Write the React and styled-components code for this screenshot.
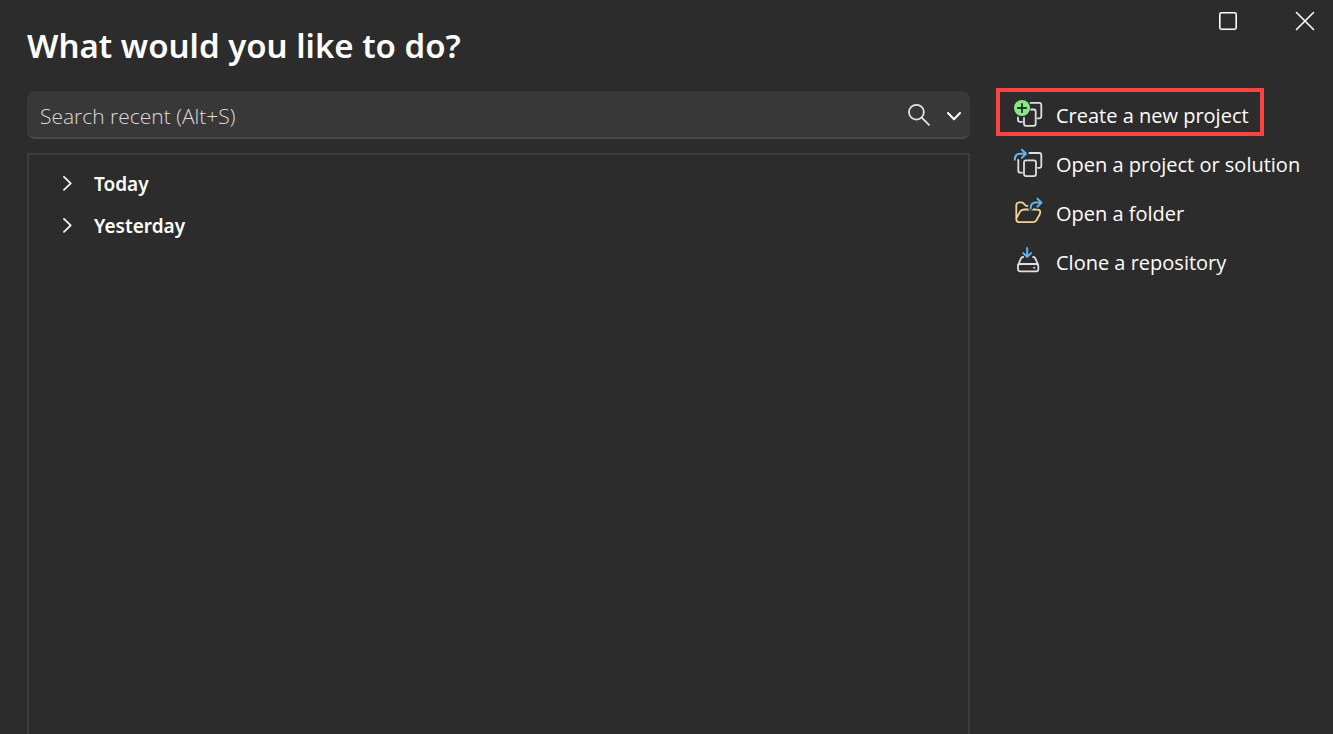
import styled, { createGlobalStyle } from "styled-components";

export default function App() {
    return (
        <>
            <GlobalStyle />
            <Window>
                <Header>
                    <Title>What would you like to do?</Title>
                    <WindowControls>
                        <ControlButton aria-label="Maximize">
                            <MaximizeIcon />
                        </ControlButton>
                        <ControlButton aria-label="Close">
                            <CloseIcon />
                        </ControlButton>
                    </WindowControls>
                </Header>
                <Content>
                    <Recent>
                        <SearchBar>
                            <SearchInput type="text" aria-label="Search recent" placeholder="Search recent (Alt+S)" />
                            <SearchButton aria-label="Search">
                                <SearchIcon />
                            </SearchButton>
                            <SearchButton aria-label="Search options">
                                <ChevronDown />
                            </SearchButton>
                        </SearchBar>
                        <RecentPanel>
                            <GroupButton aria-expanded="false">
                                <ChevronRight />
                                Today
                            </GroupButton>
                            <GroupButton aria-expanded="false">
                                <ChevronRight />
                                Yesterday
                            </GroupButton>
                        </RecentPanel>
                    </Recent>
                    <Actions>
                        <ActionButton $highlighted>
                            <NewProjectIcon />
                            <span>Create a new project</span>
                        </ActionButton>
                        <ActionButton>
                            <OpenProjectIcon />
                            <span>Open a project or solution</span>
                        </ActionButton>
                        <ActionButton>
                            <OpenFolderIcon />
                            <span>Open a folder</span>
                        </ActionButton>
                        <ActionButton>
                            <CloneIcon />
                            <span>Clone a repository</span>
                        </ActionButton>
                    </Actions>
                </Content>
            </Window>
        </>
    )
}

function MaximizeIcon() {
    return (
        <Icon width="20" height="20" viewBox="0 0 20 20" stroke="#fff" strokeWidth="1.6">
            <rect x="1.8" y="1.8" width="16.4" height="16.4" rx="1.6" />
        </Icon>
    )
}

function CloseIcon() {
    return (
        <Icon width="20" height="20" viewBox="0 0 20 20" stroke="#fff" strokeWidth="1.6">
            <path d="M1.5 1.5 18.5 18.5M18.5 1.5 1.5 18.5" />
        </Icon>
    )
}

function SearchIcon() {
    return (
        <Icon width="24" height="24" viewBox="0 0 24 24" stroke="#e4e4e4" strokeWidth="1.8">
            <circle cx="9.4" cy="10.2" r="7.4" />
            <path d="M14.8 15.6 22 22.8" />
        </Icon>
    )
}

function ChevronDown() {
    return (
        <Icon width="24" height="24" viewBox="0 0 24 24" stroke="#fff" strokeWidth="2">
            <path d="M6 11 12 17.2 18 11" />
        </Icon>
    )
}

function ChevronRight() {
    return (
        <Icon width="14" height="16" viewBox="0 0 14 16" stroke="#f2f2f2" strokeWidth="1.8">
            <path d="M4 .9 10.7 7.4 4 13.9" />
        </Icon>
    )
}

function NewProjectIcon() {
    return (
        <Icon width="32" height="32" viewBox="0 0 32 32" stroke="#dedede" strokeWidth="1.8">
            <path d="M18.5 6.8H27.2Q29.3 6.8 29.3 8.9V20.2Q29.3 22.3 27.2 22.3H25.6" />
            <path d="M19 13.5H21.7Q23.7 13.5 23.7 15.5V27.8Q23.7 29.8 21.7 29.8H14Q12 29.8 12 27.8V22" />
            <path d="M6 21.5V23.7Q6 25.8 8.1 25.8H10" />
            <circle cx="10" cy="12" r="8" fill="#89e78b" stroke="none" />
            <path d="M10 7.8V16.2M5.8 12H14.2" stroke="#20361f" strokeWidth="1.8" />
        </Icon>
    )
}

function OpenProjectIcon() {
    return (
        <Icon width="32" height="32" viewBox="0 0 32 32" stroke="#dedede" strokeWidth="1.8">
            <path d="M17.4 8H27.2Q29.3 8 29.3 10.1V20.7Q29.3 22.8 27.2 22.8H26" />
            <rect x="12" y="15.4" width="12" height="15.7" rx="2" />
            <path d="M6.3 15V25.4Q6.3 27.7 8.6 27.7H10" />
            <path d="M2.8 14.7C2.8 10.7 5 8.8 8.4 8.8H13.7M9.9 4.8 14 8.8 9.9 12.8" stroke="#62b2f2" strokeWidth="2" />
        </Icon>
    )
}

function OpenFolderIcon() {
    return (
        <Icon width="32" height="32" viewBox="0 0 32 32" stroke="#f5d490" strokeWidth="1.8">
            <path d="M15.6 11.8H14.4C12.6 11.8 12.4 8.4 9.4 8.4H7.4Q4.3 8.4 4.3 11.5V25.3Q4.3 28.2 7.2 28.2H21Q23.2 28.2 24.4 26.2L27.4 21Q29.8 16 25.4 15.5H12Q9.4 15.5 8 17.6L4.5 24.2" />
            <path d="M18.6 14.5C18.6 10.4 20.6 8.6 24 8.6H29.2M25.4 4.6 29.5 8.6 25.4 12.6" stroke="#2c2c2c" strokeWidth="4.4" />
            <path d="M18.6 14.5C18.6 10.4 20.6 8.6 24 8.6H29.2M25.4 4.6 29.5 8.6 25.4 12.6" stroke="#62b2f2" strokeWidth="2" />
        </Icon>
    )
}

function CloneIcon() {
    return (
        <Icon width="32" height="32" viewBox="0 0 32 32" stroke="#dedede" strokeWidth="1.8">
            <rect x="6" y="21" width="20.3" height="7.3" rx="2" />
            <path d="M6.2 21.9 9 15.4Q9.6 14 11.2 14M26.1 21.9 23.3 15.4Q22.7 14 21.1 14" />
            <circle cx="22.2" cy="24.7" r="1" fill="#dedede" stroke="none" />
            <path d="M15.2 5V13.5M11.3 10.1 15.2 13.9 19.1 10.1" stroke="#62b2f2" strokeWidth="2" />
        </Icon>
    )
}

const GlobalStyle = createGlobalStyle`
    * {
        box-sizing: border-box;
    }
    body {
        margin: 0;
        background-color: #2c2c2c;
        color: #fff;
        font-family: 'Open Sans', 'Noto Sans', sans-serif;
        font-size: 20px;
    }
    button, input {
        font: inherit;
        color: inherit;
        background: none;
        border: none;
        padding: 0;
        margin: 0;
    }
`;

const Icon = styled.svg`
    flex: none;
    fill: none;
    stroke-linecap: round;
    stroke-linejoin: round;
`;

const Window = styled.div`
    min-height: 100vh;
    display: flex;
    flex-direction: column;
    padding-left: 27px;
`;

const Header = styled.header`
    display: flex;
    align-items: flex-start;
    justify-content: space-between;
`;

const Title = styled.h1`
    margin: 0;
    padding: 22px 0 21px;
    font-family: 'Noto Sans', sans-serif;
    font-size: 33px;
    line-height: 48px;
    font-weight: 600;
`;

const WindowControls = styled.div`
    display: flex;
    gap: 21px;
`;

const ControlButton = styled.button`
    width: 56px;
    height: 42px;
    display: flex;
    align-items: center;
    justify-content: center;
`;

const Content = styled.main`
    flex: 1;
    display: flex;
    gap: 26px;
`;

const Recent = styled.section`
    flex: 1;
    display: flex;
    flex-direction: column;
    gap: 14px;
`;

const SearchBar = styled.div`
    height: 48px;
    display: flex;
    align-items: center;
    background-color: #383838;
    border-bottom: 2px solid #484848;
    border-radius: 8px;
    padding: 0 4px 0 13px;
    gap: 11px;
`;

const SearchInput = styled.input`
    flex: 1;
    min-width: 0;
    height: 100%;
    padding-top: 4px;
    font-size: 21px;
    font-weight: 300;
    outline: none;
    &::placeholder {
        color: #dcdcdc;
        opacity: 1;
    }
`;

const SearchButton = styled.button`
    width: 24px;
    height: 24px;
    display: flex;
`;

const RecentPanel = styled.div`
    flex: 1;
    border: 2px solid #3d3d3d;
    border-bottom: none;
    padding: 8px 0;
`;

const GroupButton = styled.button`
    width: 100%;
    height: 42px;
    display: flex;
    align-items: center;
    gap: 20px;
    padding-left: 31px;
    font-family: 'Noto Sans', sans-serif;
    font-size: 19px;
    font-weight: 600;
`;

const Actions = styled.nav`
    width: 337px;
    margin-top: -3px;
    display: flex;
    flex-direction: column;
    align-items: flex-start;
    gap: 1px;
`;

const ActionButton = styled.button`
    height: 48px;
    display: flex;
    align-items: center;
    gap: 12px;
    padding: 0 11px 0 12px;
    border: 4px solid ${({ $highlighted }) => $highlighted ? '#ff4343' : 'transparent'};
    white-space: nowrap;
    span {
        padding-top: 6px;
    }
`;
